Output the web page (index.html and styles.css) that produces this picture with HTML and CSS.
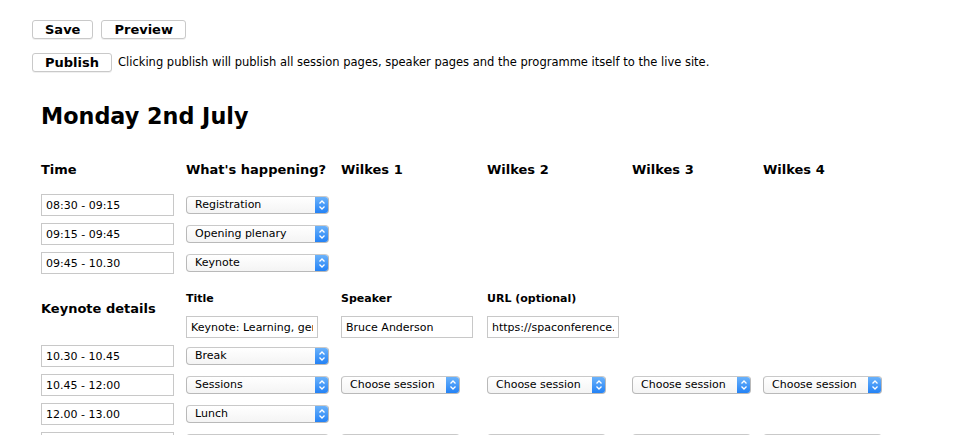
FILE: index.html
```html
<!DOCTYPE html>
<html lang="en">
<head>
<meta charset="utf-8">
<title>Programme editor</title>
<link rel="stylesheet" href="styles.css">
</head>
<body>
<div class="page">
  <div class="actions">
    <button class="btn" type="button">Save</button>
    <button class="btn" type="button">Preview</button>
  </div>
  <div class="publish">
    <button class="btn" type="button">Publish</button>
    <span class="publish-note">Clicking publish will publish all session pages, speaker pages and the programme itself to the live site.</span>
  </div>

  <section class="day">
    <h1 class="day-title">Monday 2nd July</h1>

    <div class="schedule">
      <div class="row row-head">
        <div class="th">Time</div>
        <div class="th">What's happening?</div>
        <div class="th">Wilkes 1</div>
        <div class="th">Wilkes 2</div>
        <div class="th">Wilkes 3</div>
        <div class="th">Wilkes 4</div>
      </div>

      <div class="row">
        <input class="field" type="text" value="08:30 - 09:15">
        <span class="select select-kind"><span class="select-label">Registration</span><span class="select-arrow"><svg width="14" height="18" viewBox="0 0 14 18"><path d="M4.5 7.5 L7 5 L9.5 7.5 M4.5 10.5 L7 13 L9.5 10.5" fill="none" stroke="#fff" stroke-width="1.3"/></svg></span></span>
      </div>

      <div class="row">
        <input class="field" type="text" value="09:15 - 09:45">
        <span class="select select-kind"><span class="select-label">Opening plenary</span><span class="select-arrow"><svg width="14" height="18" viewBox="0 0 14 18"><path d="M4.5 7.5 L7 5 L9.5 7.5 M4.5 10.5 L7 13 L9.5 10.5" fill="none" stroke="#fff" stroke-width="1.3"/></svg></span></span>
      </div>

      <div class="row">
        <input class="field" type="text" value="09:45 - 10.30">
        <span class="select select-kind"><span class="select-label">Keynote</span><span class="select-arrow"><svg width="14" height="18" viewBox="0 0 14 18"><path d="M4.5 7.5 L7 5 L9.5 7.5 M4.5 10.5 L7 13 L9.5 10.5" fill="none" stroke="#fff" stroke-width="1.3"/></svg></span></span>
      </div>

      <div class="row row-keynote">
        <div class="keynote-label">Keynote details</div>
        <label class="detail">
          <span class="detail-label">Title</span>
          <input class="field field-detail" type="text" value="Keynote: Learning, generalisation and the future of software">
        </label>
        <label class="detail">
          <span class="detail-label">Speaker</span>
          <input class="field field-detail" type="text" value="Bruce Anderson">
        </label>
        <label class="detail">
          <span class="detail-label">URL (optional)</span>
          <input class="field field-detail" type="text" value="https://spaconference.org/spa2018/">
        </label>
      </div>

      <div class="row">
        <input class="field" type="text" value="10.30 - 10.45">
        <span class="select select-kind"><span class="select-label">Break</span><span class="select-arrow"><svg width="14" height="18" viewBox="0 0 14 18"><path d="M4.5 7.5 L7 5 L9.5 7.5 M4.5 10.5 L7 13 L9.5 10.5" fill="none" stroke="#fff" stroke-width="1.3"/></svg></span></span>
      </div>

      <div class="row">
        <input class="field" type="text" value="10.45 - 12:00">
        <span class="select select-kind"><span class="select-label">Sessions</span><span class="select-arrow"><svg width="14" height="18" viewBox="0 0 14 18"><path d="M4.5 7.5 L7 5 L9.5 7.5 M4.5 10.5 L7 13 L9.5 10.5" fill="none" stroke="#fff" stroke-width="1.3"/></svg></span></span>
        <span class="select select-session"><span class="select-label">Choose session</span><span class="select-arrow"><svg width="14" height="18" viewBox="0 0 14 18"><path d="M4.5 7.5 L7 5 L9.5 7.5 M4.5 10.5 L7 13 L9.5 10.5" fill="none" stroke="#fff" stroke-width="1.3"/></svg></span></span>
        <span class="select select-session"><span class="select-label">Choose session</span><span class="select-arrow"><svg width="14" height="18" viewBox="0 0 14 18"><path d="M4.5 7.5 L7 5 L9.5 7.5 M4.5 10.5 L7 13 L9.5 10.5" fill="none" stroke="#fff" stroke-width="1.3"/></svg></span></span>
        <span class="select select-session"><span class="select-label">Choose session</span><span class="select-arrow"><svg width="14" height="18" viewBox="0 0 14 18"><path d="M4.5 7.5 L7 5 L9.5 7.5 M4.5 10.5 L7 13 L9.5 10.5" fill="none" stroke="#fff" stroke-width="1.3"/></svg></span></span>
        <span class="select select-session"><span class="select-label">Choose session</span><span class="select-arrow"><svg width="14" height="18" viewBox="0 0 14 18"><path d="M4.5 7.5 L7 5 L9.5 7.5 M4.5 10.5 L7 13 L9.5 10.5" fill="none" stroke="#fff" stroke-width="1.3"/></svg></span></span>
      </div>

      <div class="row">
        <input class="field" type="text" value="12.00 - 13.00">
        <span class="select select-kind"><span class="select-label">Lunch</span><span class="select-arrow"><svg width="14" height="18" viewBox="0 0 14 18"><path d="M4.5 7.5 L7 5 L9.5 7.5 M4.5 10.5 L7 13 L9.5 10.5" fill="none" stroke="#fff" stroke-width="1.3"/></svg></span></span>
      </div>

      <div class="row">
        <input class="field" type="text" value="13.00 - 14.30">
        <span class="select select-kind"><span class="select-label">Sessions</span><span class="select-arrow"><svg width="14" height="18" viewBox="0 0 14 18"><path d="M4.5 7.5 L7 5 L9.5 7.5 M4.5 10.5 L7 13 L9.5 10.5" fill="none" stroke="#fff" stroke-width="1.3"/></svg></span></span>
        <span class="select select-session"><span class="select-label">Choose session</span><span class="select-arrow"><svg width="14" height="18" viewBox="0 0 14 18"><path d="M4.5 7.5 L7 5 L9.5 7.5 M4.5 10.5 L7 13 L9.5 10.5" fill="none" stroke="#fff" stroke-width="1.3"/></svg></span></span>
        <span class="select select-session"><span class="select-label">Choose session</span><span class="select-arrow"><svg width="14" height="18" viewBox="0 0 14 18"><path d="M4.5 7.5 L7 5 L9.5 7.5 M4.5 10.5 L7 13 L9.5 10.5" fill="none" stroke="#fff" stroke-width="1.3"/></svg></span></span>
        <span class="select select-session"><span class="select-label">Choose session</span><span class="select-arrow"><svg width="14" height="18" viewBox="0 0 14 18"><path d="M4.5 7.5 L7 5 L9.5 7.5 M4.5 10.5 L7 13 L9.5 10.5" fill="none" stroke="#fff" stroke-width="1.3"/></svg></span></span>
        <span class="select select-session"><span class="select-label">Choose session</span><span class="select-arrow"><svg width="14" height="18" viewBox="0 0 14 18"><path d="M4.5 7.5 L7 5 L9.5 7.5 M4.5 10.5 L7 13 L9.5 10.5" fill="none" stroke="#fff" stroke-width="1.3"/></svg></span></span>
      </div>
    </div>
  </section>
</div>
</body>
</html>
```

FILE: styles.css
```css
* {
  box-sizing: border-box;
}

html, body {
  margin: 0;
  padding: 0;
  background: #fff;
  color: #000;
  font-family: "DejaVu Sans", Verdana, sans-serif;
}

.page {
  padding: 20px 0 0 32px;
}

.actions,
.publish {
  display: flex;
  align-items: center;
}

.actions {
  gap: 8px;
}

.publish {
  margin-top: 14px;
  gap: 6px;
}

.btn {
  height: 19px;
  padding: 0 12px;
  margin: 0;
  border: 1px solid #c9c9c9;
  border-radius: 3px;
  background: #fff;
  font-family: inherit;
  font-size: 13px;
  font-weight: bold;
  line-height: 17px;
  color: #000;
  box-shadow: 0 1px 0 rgba(0, 0, 0, 0.06);
}

.publish-note {
  font-size: 11.5px;
  line-height: 13px;
}

.day {
  padding-left: 9px;
}

.day-title {
  margin: 31px 0 0;
  font-size: 22.3px;
  font-weight: bold;
  line-height: 26px;
}

.schedule {
  margin-top: 33px;
  display: flex;
  flex-direction: column;
  gap: 7px;
}

.row {
  display: grid;
  grid-template-columns: 145px 155px 146px 145px 131px 1fr;
  align-items: center;
  min-height: 22px;
}

.row-head {
  margin-bottom: 10px;
  min-height: 0;
}

.th {
  font-size: 13px;
  font-weight: bold;
  line-height: 15px;
}

.field {
  display: block;
  width: 133px;
  height: 22px;
  margin: 0;
  padding: 0 4px;
  border: 1px solid #c8c8c8;
  border-radius: 0;
  background: #fff;
  font-family: inherit;
  font-size: 11px;
  color: #000;
  outline: none;
}

.field-detail {
  width: 132px;
}

.select {
  display: flex;
  align-items: stretch;
  height: 18px;
  border: 1px solid #b9b9b9;
  border-top-color: #c9c9c9;
  border-radius: 4px;
  background: linear-gradient(#ffffff, #f4f4f4);
  overflow: hidden;
  font-size: 11px;
  line-height: 16px;
}

.select-kind {
  width: 143px;
}

.select-session {
  width: 119px;
}

.select-label {
  flex: 1;
  padding-left: 8px;
  white-space: nowrap;
  overflow: hidden;
}

.select-arrow {
  flex: none;
  width: 14px;
  margin: -1px -1px -1px 0;
  background: linear-gradient(#6fb5fb, #1f7ff5);
  border-radius: 0 4px 4px 0;
}

.select-arrow svg {
  display: block;
}

.row-keynote {
  padding-top: 11px;
  align-items: start;
}

.keynote-label {
  padding-top: 9px;
  font-size: 13px;
  font-weight: bold;
  line-height: 15px;
}

.detail {
  display: flex;
  flex-direction: column;
  gap: 11px;
}

.detail-label {
  font-size: 11px;
  font-weight: bold;
  line-height: 13px;
}
```
